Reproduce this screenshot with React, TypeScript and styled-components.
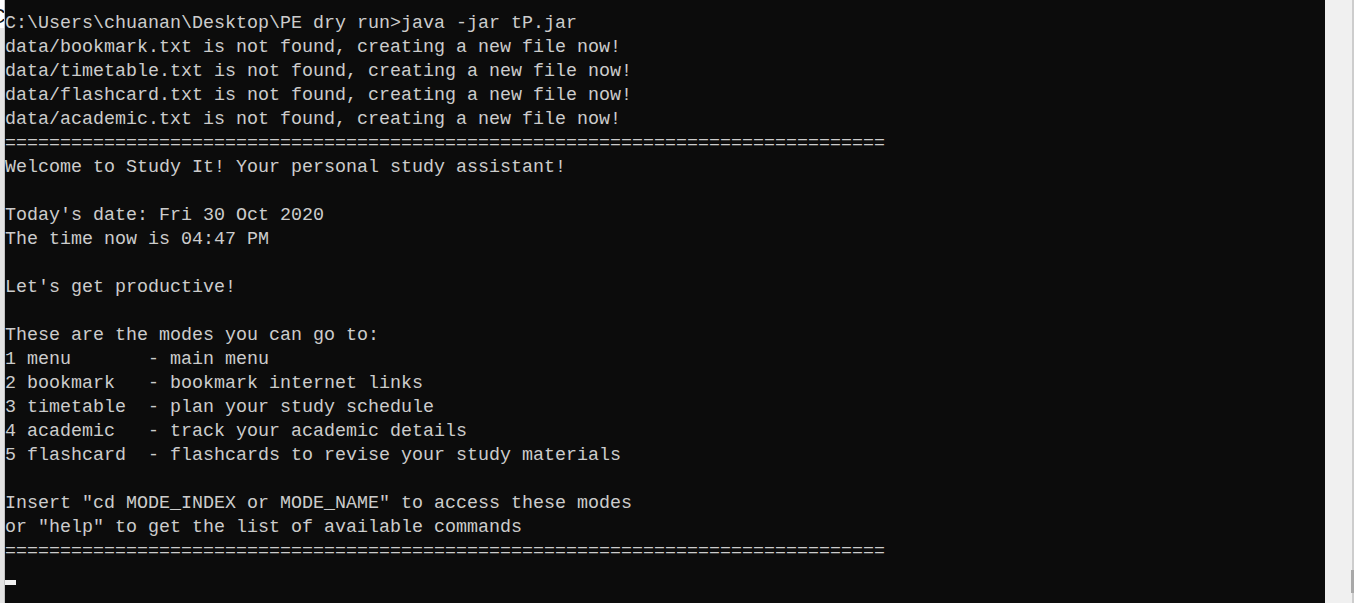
import React from "react";
import styled, { createGlobalStyle } from "styled-components";

const Global = createGlobalStyle`
  html, body { margin: 0; padding: 0; background: #0c0c0c; overflow: hidden; }
  #root { width: 1354px; height: 603px; }
`;

const Window = styled.div`
  display: flex;
  width: 1354px;
  height: 603px;
`;

const LeftEdge = styled.div`
  position: relative;
  flex: 0 0 5px;
  background: #e4e4e4;
  border-right: 1px solid #c4c4c4;
  box-sizing: border-box;
  overflow: hidden;
`;

const EdgeCap = styled.div`
  height: 28px;
  background: #ffffff;
  overflow: hidden;
  position: relative;
`;

const EdgeGlyph = styled.span`
  position: absolute;
  left: -9px;
  top: 4px;
  font-family: "Liberation Sans", Arial, sans-serif;
  font-size: 20px;
  line-height: 24px;
  color: #111;
`;

const Terminal = styled.div`
  flex: 1 1 auto;
  background: #0c0c0c;
  padding-top: 12px;
  box-sizing: border-box;
  overflow: hidden;
`;

const Line = styled.div`
  font-family: "Liberation Mono", "DejaVu Sans Mono", monospace;
  font-size: 18.333px;
  line-height: 24px;
  height: 24px;
  color: #cccccc;
  white-space: pre;
`;

const CursorLine = styled.div`
  height: 24px;
  display: flex;
  align-items: flex-end;
`;

const Cursor = styled.span`
  display: block;
  width: 11px;
  height: 5px;
  margin-bottom: 3px;
  background: #f2f2f2;
`;

const Scrollbar = styled.div`
  flex: 0 0 29px;
  background: #f0f0f0;
  border-right: 2px solid #cdcdcd;
  box-sizing: border-box;
  position: relative;
`;

const Thumb = styled.div`
  position: absolute;
  right: -2px;
  top: 570px;
  width: 3px;
  height: 23px;
  background: #a8a8a8;
`;

const sep = "=".repeat(80);

const lines = [
  "C:\\Users\\chuanan\\Desktop\\PE dry run>java -jar tP.jar",
  "data/bookmark.txt is not found, creating a new file now!",
  "data/timetable.txt is not found, creating a new file now!",
  "data/flashcard.txt is not found, creating a new file now!",
  "data/academic.txt is not found, creating a new file now!",
  sep,
  "Welcome to Study It! Your personal study assistant!",
  "",
  "Today's date: Fri 30 Oct 2020",
  "The time now is 04:47 PM",
  "",
  "Let's get productive!",
  "",
  "These are the modes you can go to:",
  "1 menu       - main menu",
  "2 bookmark   - bookmark internet links",
  "3 timetable  - plan your study schedule",
  "4 academic   - track your academic details",
  "5 flashcard  - flashcards to revise your study materials",
  "",
  "Insert \"cd MODE_INDEX or MODE_NAME\" to access these modes",
  "or \"help\" to get the list of available commands",
  sep,
];

export default function App() {
  return (
    <Window>
      <Global />
      <LeftEdge>
        <EdgeCap>
          <EdgeGlyph>C</EdgeGlyph>
        </EdgeCap>
      </LeftEdge>
      <Terminal>
        {lines.map((l, i) => (
          <Line key={i}>{l}</Line>
        ))}
        <CursorLine>
          <Cursor />
        </CursorLine>
      </Terminal>
      <Scrollbar>
        <Thumb />
      </Scrollbar>
    </Window>
  );
}
